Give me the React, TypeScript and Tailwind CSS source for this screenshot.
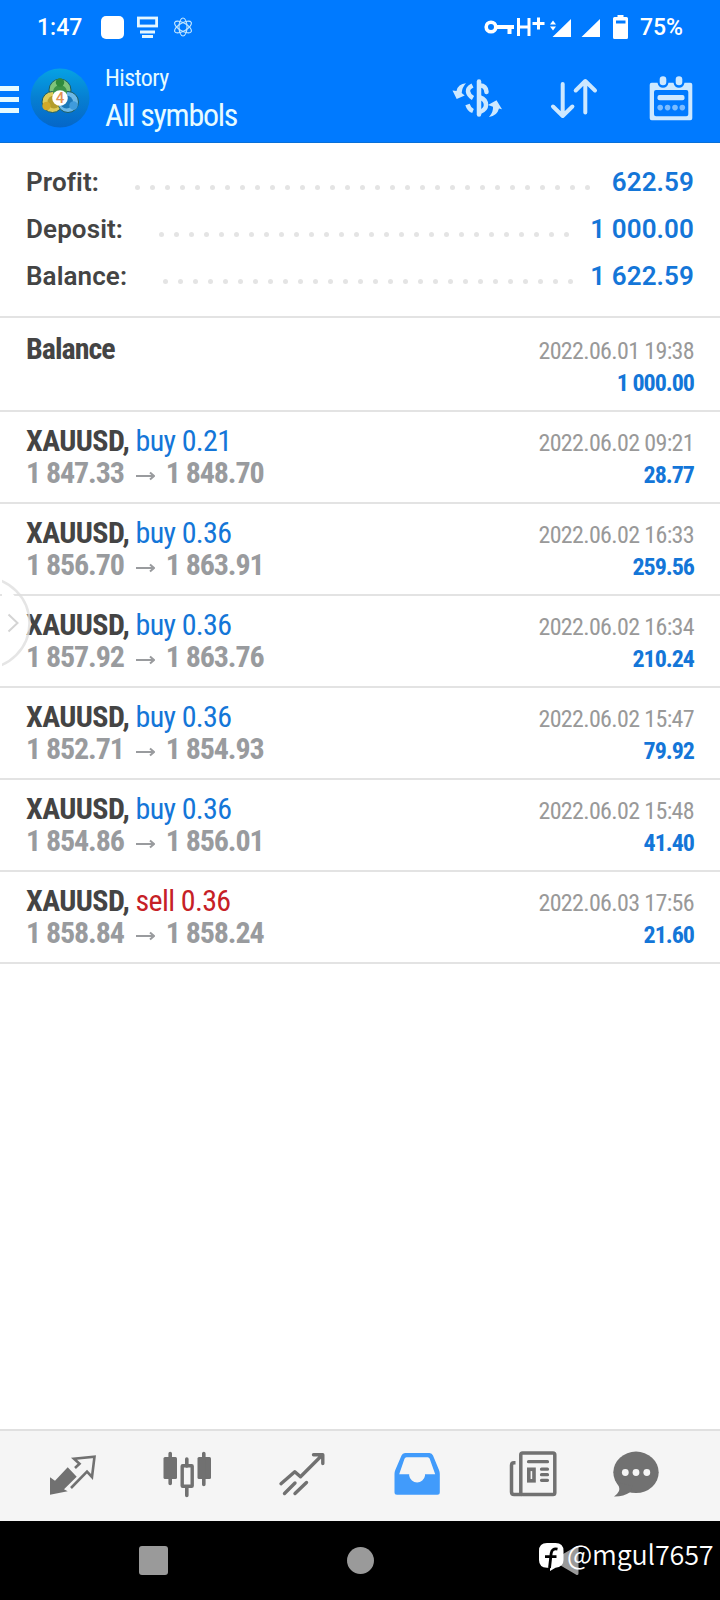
import type { ReactNode } from "react";

type Deal = {
  symbol: string;
  side: "buy" | "sell";
  volume: string;
  open: string;
  close: string;
  time: string;
  profit: string;
};

const deals: Deal[] = [
  { symbol: "XAUUSD", side: "buy", volume: "0.21", open: "1 847.33", close: "1 848.70", time: "2022.06.02 09:21", profit: "28.77" },
  { symbol: "XAUUSD", side: "buy", volume: "0.36", open: "1 856.70", close: "1 863.91", time: "2022.06.02 16:33", profit: "259.56" },
  { symbol: "XAUUSD", side: "buy", volume: "0.36", open: "1 857.92", close: "1 863.76", time: "2022.06.02 16:34", profit: "210.24" },
  { symbol: "XAUUSD", side: "buy", volume: "0.36", open: "1 852.71", close: "1 854.93", time: "2022.06.02 15:47", profit: "79.92" },
  { symbol: "XAUUSD", side: "buy", volume: "0.36", open: "1 854.86", close: "1 856.01", time: "2022.06.02 15:48", profit: "41.40" },
  { symbol: "XAUUSD", side: "sell", volume: "0.36", open: "1 858.84", close: "1 858.24", time: "2022.06.03 17:56", profit: "21.60" },
];

const summary = [
  { label: "Profit:", value: "622.59", dots: 31, labelWidth: "w-[109px]" },
  { label: "Deposit:", value: "1 000.00", dots: 28, labelWidth: "w-[133px]" },
  { label: "Balance:", value: "1 622.59", dots: 28, labelWidth: "w-[137px]" },
];

function StatusBar() {
  return (
    <div className="flex h-[54px] items-center pl-[37px] pr-[37px] text-[23px] font-medium text-white">
      <span className="w-[64px] pt-[2px]">1:47</span>
      <div className="h-[23px] w-[23px] rounded-[5px] bg-white" />
      <svg className="ml-[13px] h-6 w-[21px]" viewBox="0 0 21 24" fill="none" stroke="#e4f6ff">
        <rect x="1.4" y="3" width="18.2" height="8" strokeWidth="2.8" />
        <path d="M3 17h15M5 21.5h11" strokeWidth="2.8" />
      </svg>
      <svg className="ml-4 h-5 w-[18px]" viewBox="0 0 18 20" fill="none" stroke="#c5e8ff" strokeWidth="1.1">
        <ellipse cx="9" cy="10" rx="4" ry="9" />
        <ellipse cx="9" cy="10" rx="4" ry="9.4" transform="rotate(60 9 10)" />
        <ellipse cx="9" cy="10" rx="4" ry="9.4" transform="rotate(-60 9 10)" />
      </svg>
      <div className="ml-auto flex items-center">
        <svg className="h-6 w-[147px]" viewBox="0 0 147 24" fill="#fff">
          {/* vpn key */}
          <circle cx="7" cy="12" r="4.8" fill="none" stroke="#fff" strokeWidth="3.6" />
          <path d="M12 10h18v4h-2.5v5h-4v-5H12z" />
          {/* H+ */}
          <path d="M34.5 3v18M45 3v18M34.5 12h11M48.5 8.500h12M54.5 2.500v12" fill="none" stroke="#fff" strokeWidth="3" />
          {/* signal */}
          <path d="M66 9.5l3-4 3 4zM66 11.5l3 4 3-4zM68.5 22L87 4v18zM97.5 22L116 4v18z" />
          {/* battery */}
          <path fillRule="evenodd" d="M133.5 0h6v2h3q1.5 0 1.5 1.5v19q0 1.5-1.5 1.5h-12q-1.5 0-1.5-1.5v-19q0-1.5 1.5-1.5h3zM132 5.5v3h9.5v-3z" />
        </svg>
        <span className="ml-[9px] pt-[2px]">75%</span>
      </div>
    </div>
  );
}

function Logo() {
  return (
    <svg className="-mt-[2px] ml-[11px] h-[60px] w-[60px]" viewBox="0 0 60 60">
      <defs>
        <linearGradient id="disc" x1="0" y1="0" x2="0" y2="1">
          <stop offset="0" stopColor="#06a2e4" />
          <stop offset="0.5" stopColor="#067fd2" />
          <stop offset="1" stopColor="#0566c8" />
        </linearGradient>
      </defs>
      <circle cx="30" cy="30" r="29.5" fill="url(#disc)" />
      <g stroke="#1c5d63" strokeWidth="1">
        <circle cx="30" cy="22" r="11" fill="#7fc47a" />
        <circle cx="22.5" cy="34" r="10.5" fill="#dccb5a" />
        <circle cx="38" cy="34" r="10.5" fill="#6db8e6" />
      </g>
      <circle cx="30" cy="24" r="7" fill="#3c9347" />
      <circle cx="24" cy="34" r="6.500" fill="#b39e2c" />
      <circle cx="36.5" cy="34" r="6.500" fill="#1c78b8" />
      <circle cx="30" cy="14.5" r="4.2" fill="#2f8a3c" />
      <circle cx="16.5" cy="38" r="4.2" fill="#d0a92a" />
      <circle cx="43.5" cy="37.5" r="4.2" fill="#3f9bdc" />
      <circle cx="30" cy="30" r="7.8" fill="#fff" />
      <text x="30" y="35.300" textAnchor="middle" fontSize="15" fontWeight="500" fill="#e39252">4</text>
    </svg>
  );
}

function HeaderActions() {
  return (
    <div className="ml-auto flex h-[48px] text-[#cde8ff]">
      <svg className="h-[48px] w-[54px]" viewBox="0 0 54 48" fill="currentColor">
        <g fill="none" stroke="currentColor" strokeWidth="4.5">
          <path d="M29 6.500v33" strokeLinecap="round" />
          <path d="M30 10.500q6 0 6.500 6.500" strokeLinecap="round" />
          <path d="M30 22.500q6 2 6 7.500 0 4.500-6 7" />
          <path d="M22.500 10.500q-5 2.500-4.500 6 .5 4 5 6.500M17.500 29.500q1.500 5 5.500 6.500" />
        </g>
        <path d="M16 8.300q-8 .5-9.500 7.700l-4-.5 4.200 8.500 8-3.500-3-2.500q.3-5.500 4.300-9.700z" />
        <path d="M39 42q8-1 10-8.500l3 .8-5.500-9L38 30l5 1.800q.5 5.200-4 10.200z" />
      </svg>
      <svg className="ml-[44px] h-[48px] w-[54px]" viewBox="0 0 54 48" fill="none" stroke="currentColor" strokeWidth="4" strokeLinecap="round" strokeLinejoin="round">
        <path d="M14.700 9v31.500M5 31.500l9.700 9.500 9.700-9.500M37.300 37.500V6.500M27.700 15.500l9.600-9.500 9.700 9.500" />
      </svg>
      <svg className="ml-[46px] h-[48px] w-[46px]" viewBox="0 0 46 48" fill="currentColor">
        <path fillRule="evenodd" d="M3.700 7.700h5.800q1 5 5.500 5t5.500-5h5q1 5 5.500 5t5.500-5h5.800q2 0 2 2v33.600q0 2-2 2H3.700q-2 0-2-2V9.700q0-2 2-2zM8 15q-2 0-2 2v22.300q0 2 2 2h30.300q2 0 2-2V17q0-2-2-2z" />
        <rect x="11.700" y="1.300" width="6.600" height="9" rx="3.300" />
        <rect x="27.700" y="1.300" width="6.600" height="9" rx="3.300" />
        <rect x="9.500" y="20" width="27" height="5.200" rx="2" />
        <g opacity="0.600">
          <circle cx="12.200" cy="32.600" r="2.800" />
          <circle cx="19.600" cy="32.600" r="2.800" />
          <circle cx="27" cy="32.600" r="2.800" />
          <circle cx="34.300" cy="32.600" r="2.800" />
        </g>
      </svg>
    </div>
  );
}

function Header() {
  return (
    <header className="h-[143px] border-b border-[#0870d8] bg-[#007aff]">
      <StatusBar />
      <div className="flex items-center pr-[26px] pt-[8px]">
        <div className="flex w-[19px] flex-col gap-[6px]">
          <div className="h-[5px] bg-[#e6fbff]" />
          <div className="h-[5px] bg-[#e6fbff]" />
          <div className="h-[5px] bg-[#e6fbff]" />
        </div>
        <Logo />
        <div className="ml-[15px] flex flex-col text-[#e6fbff] [font-stretch:75%]">
          <span className="text-[24px] leading-8 tracking-[-0.6px]">History</span>
          <span className="text-[32px] font-[450] leading-[42px] tracking-[-1.3px]">All symbols</span>
        </div>
        <HeaderActions />
      </div>
    </header>
  );
}

function Summary() {
  return (
    <section className="h-[175px] border-b-2 border-[#e3e3e3] px-[26px] pt-[16px] text-[26px] font-semibold leading-[47px]">
      {summary.map((row) => (
        <div key={row.label} className="flex items-center">
          <span className={`${row.labelWidth} shrink-0 text-[#444] tracking-[0.1px]`}>{row.label}</span>
          <div className="flex gap-[10px] pt-[9px]">
            {Array.from({ length: row.dots }, (_, i) => (
              <span key={i} className="h-[5px] w-[5px] rounded-full bg-[#e4e4e4]" />
            ))}
          </div>
          <span className="ml-auto text-[#1476d8] tracking-[0.1px]">{row.value}</span>
        </div>
      ))}
    </section>
  );
}

function Line({ children }: { children: ReactNode }) {
  return <div className="flex h-8 items-baseline justify-between leading-8">{children}</div>;
}

function DealRow({ deal }: { deal: Deal }) {
  return (
    <div className="h-[92px] border-b-2 border-[#e3e3e3] pl-[26px] pr-[25px] pt-[13px]">
      <Line>
        <span className="text-[30px] font-bold text-[#444] tracking-[-0.6px]">
          {deal.symbol},{" "}
          <span className={`font-normal tracking-[-0.65px] ${deal.side === "buy" ? "text-[#1476d8]" : "text-[#c62026]"}`}>
            {deal.side} {deal.volume}
          </span>
        </span>
        <span className="mr-px text-[24px] text-[#999] tracking-[-0.65px]">{deal.time}</span>
      </Line>
      <Line>
        <span className="flex items-center text-[30px] font-bold text-[#999b9e] tracking-[-1.1px]">
          {deal.open}
          <svg className="ml-[12px] mr-[11px] mt-[6px] h-3 w-[19px]" viewBox="0 0 19 12" fill="none" stroke="currentColor" strokeWidth="2">
            <path d="M0 6h18M14 2.500L18 6l-4 3.500" />
          </svg>
          {deal.close}
        </span>
        <span className="mr-px text-[24px] font-bold text-[#1476d8] tracking-[-1px]">{deal.profit}</span>
      </Line>
    </div>
  );
}

function TabBar() {
  return (
    <nav className="flex h-[92px] gap-[67px] border-t-2 border-[#e0e0e0] bg-[#f5f5f5] pl-12 pt-[19px] text-[#717171]">
      {/* quotes */}
      <svg className="h-12 w-12" viewBox="0 0 48 48">
        <path fill="currentColor" d="M2 27.300l5 3.400 12.700-13.400 9 9.400L16 39.300l3.700 2L2 44.700z" />
        <path fill="none" stroke="currentColor" strokeWidth="2.600" d="M27 18l4.500-4.300-5.500-5 20.500-2L44 27l-5-5.300L23 38" />
      </svg>
      {/* chart */}
      <svg className="h-12 w-12" viewBox="0 0 48 48" fill="currentColor">
        <rect x="0.500" y="7" width="13.500" height="22" rx="1.500" />
        <rect x="34.500" y="7" width="13.500" height="22" rx="1.500" />
        <path d="M7.200 3.500v30M40.800 3.500v31M23.800 9v7M23.800 37v8.500" stroke="currentColor" strokeWidth="3.600" strokeLinecap="round" />
        <rect x="19.200" y="15.700" width="10" height="20.500" rx="0.500" fill="none" stroke="currentColor" strokeWidth="3.400" />
      </svg>
      {/* trade */}
      <svg className="h-12 w-12" viewBox="0 0 48 48" fill="none" stroke="currentColor" strokeWidth="3.400" strokeLinecap="round" strokeLinejoin="round">
        <path d="M3 33.700l13.800-12 5.700 5L44 5.200M35.500 4.700h9.300v8.800M6.500 43.500L17 33M17 43.500L28.500 32.500" />
      </svg>
      {/* history */}
      <svg className="h-12 w-12 text-[#419bfb]" viewBox="0 0 48 48">
        <path
          fill="currentColor"
          fillRule="evenodd"
          d="M12 3h24.500q2.500 0 3.500 2.500L46 20q.8 2 .8 4v18.200q0 2.500-2.500 2.500H4q-2.500 0-2.500-2.500V24q0-2 .8-4L8.500 5.500Q9.500 3 12 3zM13.500 7.300q-1.500 0-2 1.500L6.200 24.300h10v1.400a8 8 0 0 0 15.800 0v-1.400h10.200L36.700 8.800q-.5-1.500-2-1.500z"
        />
      </svg>
      {/* news */}
      <svg className="ml-px h-12 w-12" viewBox="0 0 48 48" fill="none" stroke="currentColor" strokeWidth="3.500">
        <rect x="11.800" y="3" width="34" height="41.500" rx="1.800" />
        <path d="M6.500 12.700H5q-2.500 0-2.500 2.500V42q0 2.500 2.500 2.500h8" />
        <path d="M19.500 11.700h19M32.500 19.200h6M32.500 24.700h6M32.500 30.300h6" strokeWidth="3.200" strokeLinecap="round" />
        <rect x="19.800" y="19.300" width="5.200" height="11.500" strokeWidth="3.600" />
      </svg>
      {/* messages */}
      <svg className="-ml-[12px] h-12 w-12" viewBox="0 0 48 48" fill="currentColor">
        <ellipse cx="24" cy="22.300" rx="22.700" ry="20.700" />
        <path d="M4.500 32q4 6 2.500 9-2 4-5 5.500 9 .3 16.500-4.500l2-6z" />
        <g fill="#f5f5f5">
          <circle cx="13.300" cy="22.500" r="3.400" />
          <circle cx="24" cy="22.500" r="3.400" />
          <circle cx="34.800" cy="22.500" r="3.400" />
        </g>
      </svg>
    </nav>
  );
}

function SystemBar() {
  return (
    <div className="relative flex h-[79px] items-center bg-black pl-[139px]">
      <div className="h-[29px] w-[29px] rounded-[3px] bg-[#9a9a9a]" />
      <div className="ml-[179px] h-[27px] w-[27px] rounded-full bg-[#9a9a9a]" />
      <svg className="ml-[178px] h-[29px] w-[27px]" viewBox="0 0 27 29">
        <path d="M25 1.500v26L3 14.500z" fill="#9a9a9a" stroke="#9a9a9a" strokeWidth="3" strokeLinejoin="round" />
      </svg>
      {/* author mark laid over the buttons */}
      <div className="absolute left-[539px] top-[16px] flex items-start text-white">
        <svg className="mt-[6px] h-7 w-[25px]" viewBox="0 0 25 28">
          <path d="M8 0h8.500Q24.500 0 24.500 8v9q0 7-8 7.700L11 28v-3.200H8Q0 24.500 0 17V8Q0 0 8 0z" fill="#fff" />
          <path d="M18.500 6.200q-5.500-1.200-6.300 4L10.500 25M6 13.700h11.500" fill="none" stroke="#000" strokeWidth="2.800" />
        </svg>
        <span className="ml-[3px] whitespace-nowrap font-['Noto_Sans_CJK_SC',sans-serif] text-[27px] font-[350] leading-[34px] tracking-[-0.2px]">
          @mgul7657
        </span>
      </div>
    </div>
  );
}

export default function App() {
  return (
    <div className="relative flex h-[1600px] w-[720px] flex-col overflow-hidden bg-white font-['Roboto',sans-serif]">
      <Header />
      <Summary />
      <main className="flex-1 [font-stretch:75%]">
        <div className="h-[94px] border-b-2 border-[#e3e3e3] px-[26px] pt-[15px]">
          <Line>
            <span className="text-[30px] font-bold text-[#444] tracking-[-1px]">Balance</span>
            <span className="text-[24px] text-[#999] tracking-[-0.65px]">2022.06.01 19:38</span>
          </Line>
          <div className="pt-[2px] text-right text-[24px] font-bold leading-8 text-[#1476d8] tracking-[-1px]">1 000.00</div>
        </div>
        {deals.map((deal) => (
          <DealRow key={deal.time} deal={deal} />
        ))}
      </main>
      <TabBar />
      <SystemBar />
      {/* side panel handle */}
      <svg className="absolute left-[2px] top-[577px] h-[92px] w-[30px]" viewBox="0 0 30 92" fill="none">
        <circle cx="-18" cy="46" r="45.500" stroke="#dedede" strokeOpacity="0.800" strokeWidth="2.500" />
        <circle cx="-18" cy="46" r="41" fill="#fff" />
        <path d="M6.500 37.500l9 8.500-9 8.500" stroke="#d4d4d4" strokeWidth="2" />
      </svg>
    </div>
  );
}
